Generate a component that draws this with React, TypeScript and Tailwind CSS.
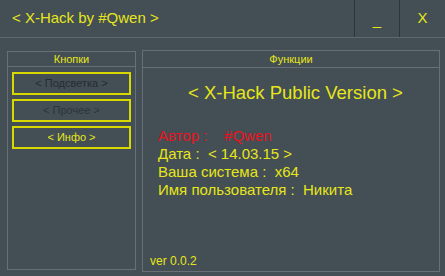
import React from "react";

const font = { fontFamily: '"Liberation Sans", Arial, sans-serif' };

const SideButton = ({ label, tone }: { label: string; tone: string }) => (
  <button
    type="button"
    className={`flex h-[23px] w-[119px] items-center justify-center border-2 border-[#d8d800] text-[11px] ${tone}`}
  >
    {label}
  </button>
);

const App = () => {
  return (
    <div
      className="flex h-[276px] w-[445px] flex-col overflow-hidden bg-[#444e55] text-[#e6e61a]"
      style={font}
    >
      <div className="flex h-[38px] shrink-0 border-b border-[#5f686e]">
        <div className="flex flex-1 items-center pl-[12px] text-[15px]">
          &lt; X-Hack by #Qwen &gt;
        </div>
        <div className="flex w-[45px] items-center justify-center border-l border-[#2e363b] pt-[4px] text-[15px]">
          _
        </div>
        <div className="flex w-[46px] items-center justify-center border-l border-[#2e363b] text-[15px]">
          X
        </div>
      </div>

      <div className="flex gap-[6px] pl-[7px] pt-[12px]">
        <div className="mt-[1px] flex h-[219px] w-[129px] flex-col border border-[#687076]">
          <div className="flex h-[15px] items-center justify-center border-b border-[#687076] text-[11px]">
            Кнопки
          </div>
          <div className="flex flex-col gap-[4px] pl-[4px] pt-[5px]">
            <SideButton label="< Подсветка >" tone="text-[color:#252d32]" />
            <SideButton label="< Прочее >" tone="text-[color:#2c353a]" />
            <SideButton label="< Инфо >" tone="text-[color:#e6e61a]" />
          </div>
        </div>

        <div className="flex h-[222px] w-[298px] flex-col border border-[#687076]">
          <div className="flex h-[17px] items-center justify-center border-b border-[#687076] text-[11px]">
            Функции
          </div>
          <div className="mt-[11px] pl-[45px] text-[18.5px]">
            &lt; X-Hack Public Version &gt;
          </div>
          <div className="mt-[20px] flex flex-col pl-[15px] text-[15px] leading-[18px]">
            <div className="text-[#e8141e]">Автор :&nbsp;&nbsp;&nbsp; #Qwen</div>
            <div>Дата :&nbsp; &lt; 14.03.15 &gt;</div>
            <div>Ваша система :&nbsp; x64</div>
            <div>Имя пользователя :&nbsp; Никита</div>
          </div>
          <div className="mt-auto pb-[1px] pl-[7px] text-[12px]">ver 0.0.2</div>
        </div>
      </div>
    </div>
  );
};

export default App;
